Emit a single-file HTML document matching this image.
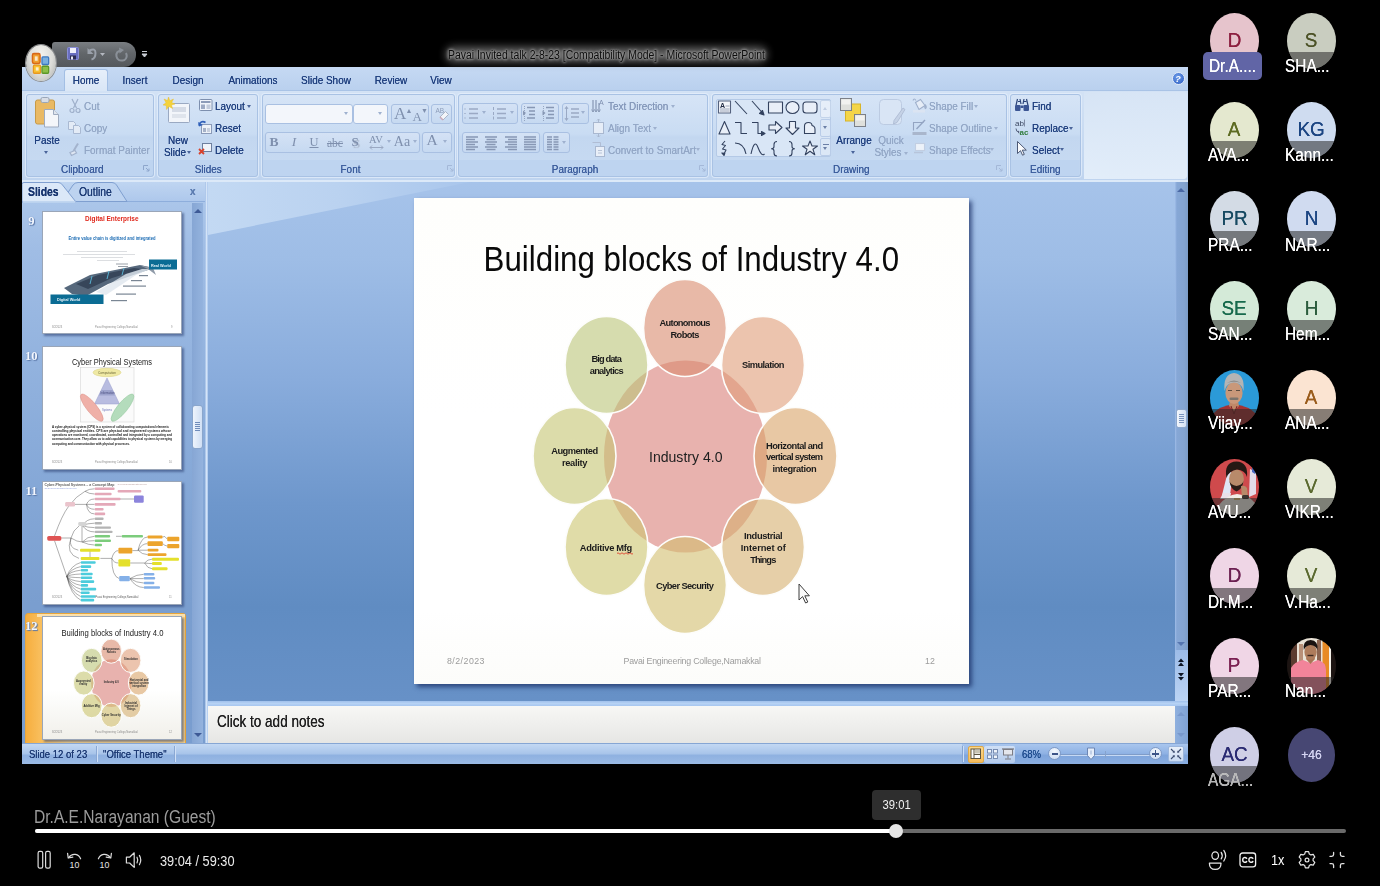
<!DOCTYPE html>
<html lang="en">
<head>
<meta charset="utf-8">
<title>Meeting recording</title>
<style>
*{box-sizing:border-box;margin:0;padding:0}
html,body{width:1380px;height:886px;overflow:hidden;background:#000}
body{position:relative;font-family:"Liberation Sans",sans-serif;color:#fff}
.abs{position:absolute}
/* ---------- participants ---------- */
.av{position:absolute;width:49px;height:56px;border-radius:50%;overflow:hidden;text-align:center;font-size:21px;line-height:54.5px;text-shadow:0 0 .6px currentColor;background-image:linear-gradient(rgba(0,0,0,.05),rgba(255,255,255,.06))}
.av i{position:absolute;left:0;right:0;top:39.25px;bottom:0;background:rgba(40,40,40,.55)}
.av span{display:inline-block;transform:scaleX(.9)}
.nm{text-shadow:0 0 .5px #fff;position:absolute;width:60px;font-size:17.5px;line-height:22px;color:#fff;white-space:nowrap;transform-origin:0 50%;transform:scaleX(.88);filter:blur(.3px)}
/* ---------- player ---------- */
#spk{left:34px;top:806px;font-size:17.5px;line-height:22px;color:#9c9c9c;transform-origin:0 50%;transform:scaleX(.89);white-space:nowrap}
#track{left:35px;top:829px;width:1311px;height:4px;border-radius:2px;background:#6a6a6a}
#played{left:35px;top:829px;width:861px;height:4px;border-radius:2px;background:#fff}
#thumb{left:889px;top:824px;width:14px;height:14px;border-radius:50%;background:#e4e4e4}
#tip{left:872px;top:790px;width:49px;height:30px;border-radius:4px;background:#2e2e2e;font-size:12.5px;line-height:30px;text-align:center;color:#f2f2f2}
#tip span{display:inline-block;transform:scaleX(.9)}
#time{left:160px;top:852px;font-size:14.5px;line-height:18px;color:#ececec;transform-origin:0 50%;transform:scaleX(.88);white-space:nowrap}
#spd{left:1271px;top:851px;font-size:15px;line-height:18px;color:#fff;transform-origin:0 50%;transform:scaleX(.85)}
/* ---------- powerpoint window ---------- */
#ppt{left:22px;top:67px;width:1166px;height:697px;background:#bdd3ee;overflow:hidden;filter:blur(.45px)}
#ppt, #ppt *{font-family:"Liberation Sans",sans-serif}

.tab{position:absolute;top:72px;height:16px;font-size:11.5px;line-height:16px;text-align:center;color:#1f3f7e;white-space:nowrap}
.grp{position:absolute;top:93.5px;height:83.5px;border:1px solid #a9c2e4;border-radius:3px;background:linear-gradient(#bed4f0,#bed4f0) bottom/100% 16px no-repeat,linear-gradient(#d6e4f6,#c9dcf3 48%,#c3d7f0 52%,#c8dbf2);box-shadow:0 0 0 1px rgba(230,240,252,.7)}
.grp b{position:absolute;left:0;right:0;bottom:-2px;height:16px;font-weight:normal;font-size:11.5px;line-height:15px;text-align:center;color:#3b5c9c;border-radius:0 0 2px 2px}
.t{position:absolute;font-size:11.5px;line-height:14px;white-space:nowrap;color:#1f3f7e}
.d{color:#93a7c6}

.tab,.t,.grp b{transform:scaleX(.865);text-shadow:0 0 .6px currentColor}
.grp.l b{right:16px}
.t{transform-origin:0 50%}
.t.c{text-align:center;transform-origin:50% 50%}
.arr{position:absolute;width:0;height:0;border:2.5px solid transparent;border-top:3px solid #4a649a;border-bottom:0}
.arr.s{border-top-color:#9fb1cf}
.bx{position:absolute;border:1px solid #a9c0e2;border-radius:3px;background:linear-gradient(#d4e2f5,#c6d9f1)}
.sf{position:absolute;font-family:"Liberation Serif",serif !important;color:#7f90ae;line-height:18px;white-space:nowrap}
.sf.c{text-align:center}

.num{position:absolute;width:17px;text-align:center;font-size:12.5px;font-weight:bold;line-height:14px;color:#f4f8ff;text-shadow:1px 1px 1px #5c78a8,0 0 1px #6c88b8;font-family:"Liberation Serif",serif !important}
.th{position:absolute;left:41.8px;width:140px;height:123.5px;background:#fff;border:1px solid #9aa6b8;box-shadow:1.5px 1.5px 2px rgba(40,60,110,.55)}

.zc{position:absolute;top:747px;width:13px;height:13px;border-radius:50%;border:1px solid #7f9ac6;background:radial-gradient(circle at 50% 30%,#f4f8fd,#c6d8f2)}
.av svg{filter:blur(.7px)}
</style>
</head>
<body>

<!-- ======= shared PowerPoint window ======= -->
<div id="ppt" class="abs">
<div id="g" class="abs" style="left:-22px;top:-67px;width:1380px;height:886px">
<!-- tab strip -->
<div class="abs" style="left:22px;top:67px;width:1166px;height:24px;background:linear-gradient(#c5d9f3,#b9d0ee)"></div>
<div class="abs" style="left:22px;top:90px;width:1166px;height:90px;background:linear-gradient(#d3e2f5,#c6d9f1 60%,#bfd4ef)"></div>
<div class="abs" style="left:22px;top:90px;width:1166px;height:1px;background:#a9c3e6"></div>
<div class="abs" style="left:64px;top:69px;width:44px;height:22px;border:1px solid #a3bfe4;border-bottom:0;border-radius:3px 3px 0 0;background:linear-gradient(#e6effa,#d9e6f6)"></div>
<div class="tab" style="left:64px;width:44px">Home</div>
<div class="tab" style="left:113px;width:44px">Insert</div>
<div class="tab" style="left:164px;width:48px">Design</div>
<div class="tab" style="left:220px;width:66px">Animations</div>
<div class="tab" style="left:294px;width:64px">Slide Show</div>
<div class="tab" style="left:368px;width:46px">Review</div>
<div class="tab" style="left:424px;width:34px">View</div>
<!-- help -->
<div class="abs" style="left:1171.500px;top:72px;width:13px;height:13px;border-radius:50%;background:radial-gradient(circle at 40% 35%,#6d9be8,#2a5bc0);border:1px solid #dfe9f8;color:#fff;font-size:9.500px;font-weight:bold;line-height:11px;text-align:center;font-style:italic">?</div>
<div class="abs" style="left:1084px;top:92px;width:102.500px;height:87px;border-radius:0 4px 4px 0;background:linear-gradient(90deg,rgba(222,234,248,0),#dce8f7 30%),linear-gradient(#d6e4f5,#e2edf9)"></div>
<div class="abs" style="left:1084px;top:92px;width:102.500px;height:87px;border-radius:0 4px 4px 0;background:linear-gradient(#d6e4f5,#e3eefa);opacity:.8"></div>
<!-- groups -->
<div class="grp l" style="left:25.500px;width:128.500px"><b>Clipboard</b></div>
<div class="grp" style="left:157.500px;width:100.500px"><b>Slides</b></div>
<div class="grp l" style="left:261.500px;width:193px"><b>Font</b></div>
<div class="grp l" style="left:458px;width:250px"><b>Paragraph</b></div>
<div class="grp l" style="left:712px;width:294.500px"><b>Drawing</b></div>
<div class="grp" style="left:1010px;width:70.500px"><b>Editing</b></div>
<!-- Clipboard -->
<svg class="abs" style="left:32px;top:96px" width="30" height="34" viewBox="0 0 30 34"><rect x="3.500" y="4" width="19" height="24" rx="2" fill="#e9b964" stroke="#c79a48"/><rect x="9" y="1.500" width="8" height="5" rx="1.500" fill="#d8dde6" stroke="#9aa6b8"/><path d="M12.500 13.500h9l5 5v12.500h-14z" fill="#f4f6fa" stroke="#9eabc0"/><path d="M21.500 13.500v5h5" fill="#dfe5ee" stroke="#9eabc0"/></svg>
<div class="t c" style="left:27px;width:40px;top:132.500px">Paste</div>
<div class="arr" style="left:44px;top:151px"></div>
<svg class="abs" style="left:68px;top:98px" width="14" height="16" viewBox="0 0 14 16" fill="none" stroke="#9fb0cb" stroke-width="1.200"><path d="M4 1l4.500 9M10 1L5.500 10"/><circle cx="4" cy="12.500" r="2"/><circle cx="10" cy="12.500" r="2"/></svg>
<div class="t d" style="left:84px;top:99px">Cut</div>
<svg class="abs" style="left:67px;top:120px" width="15" height="15" viewBox="0 0 15 15" fill="#e3ebf6" stroke="#a9b9d2"><path d="M1.500 1.500h5l2 2v6h-7z"/><path d="M6.500 5.500h5l2 2v6h-7z"/></svg>
<div class="t d" style="left:84px;top:121px">Copy</div>
<svg class="abs" style="left:68px;top:142px" width="14" height="15" viewBox="0 0 14 15" fill="none" stroke="#a3b3cd" stroke-width="1.300"><path d="M10 1.500L5.500 9" stroke-width="2"/><path d="M2 10.500l5-2 1.500 2.500-5 2.500z" fill="#dfe7f3"/></svg>
<div class="t d" style="left:84px;top:142.500px">Format Painter</div>
<svg class="abs" style="left:143px;top:165px" width="7" height="7" viewBox="0 0 7 7" fill="none" stroke="#8ea6cc"><path d="M.5 5V.5H5M3 3l3 3M6 3.500V6H3.500"/></svg>
<!-- Slides -->
<svg class="abs" style="left:163px;top:97px" width="30" height="30" viewBox="0 0 30 30"><rect x="5.500" y="6.500" width="21" height="19" rx="1" fill="#f2f5fa" stroke="#9aa9c2"/><rect x="9" y="10" width="14" height="5" fill="#d5dbe6"/><rect x="9" y="17" width="14" height="4" fill="#dfe4ec"/><path d="M5.500 0l1.300 3.700L10.500 2 8.700 5.500 12 7 8.500 8l1 3.500L6 9.500 3.500 12.500 3.300 8.500 0 8l3-2.300L1 2l3.500 1.500z" fill="#f4d23c" stroke="#e8b820" stroke-width=".4"/></svg>
<div class="t c" style="left:158px;width:40px;top:132.500px">New</div>
<div class="t c" style="left:155px;width:40px;top:144.500px">Slide</div>
<div class="arr" style="left:187px;top:151px"></div>
<svg class="abs" style="left:199px;top:99px" width="14" height="13" viewBox="0 0 14 13"><rect x=".5" y=".5" width="12.500" height="11" rx="1" fill="#f0f4fa" stroke="#7d8fae"/><rect x="2" y="2" width="9.500" height="2" fill="#8d9cb8"/><rect x="2" y="5.500" width="4" height="4.500" fill="#9eabc4"/><rect x="7.500" y="5.500" width="4" height="4.500" fill="#c2cbdb"/></svg>
<div class="t" style="left:215px;top:99px">Layout</div>
<div class="arr" style="left:247px;top:104.500px"></div>
<svg class="abs" style="left:198px;top:119px" width="15" height="16" viewBox="0 0 15 16"><rect x="3.500" y="5.500" width="10" height="9" fill="#eef2f8" stroke="#8a9ab8"/><rect x="5" y="9" width="3" height="4" fill="#a6b2c8"/><rect x="9" y="9" width="3" height="4" fill="#c8d0de"/><path d="M1 6.500C1.500 3 4.500 1.500 7.500 3.500" fill="none" stroke="#2f5fb8" stroke-width="1.600"/><path d="M0 3l1 4.500 4-1.500z" fill="#2f5fb8"/></svg>
<div class="t" style="left:215px;top:121px">Reset</div>
<svg class="abs" style="left:198px;top:142px" width="15" height="14" viewBox="0 0 15 14"><rect x="4.500" y="1.500" width="9" height="8" fill="#f0f4fa" stroke="#6d7f9e"/><path d="M1 7l5 5M6 7l-5 5" stroke="#d8422c" stroke-width="1.800"/></svg>
<div class="t" style="left:215px;top:142.500px">Delete</div>
<!-- Font -->
<div class="bx" style="left:265px;top:104px;width:88px;height:20px;background:#f3f6fb"></div>
<div class="bx" style="left:352.500px;top:104px;width:35px;height:20px;background:#f3f6fb"></div>
<div class="arr s" style="left:344px;top:112px"></div>
<div class="arr s" style="left:378px;top:112px"></div>
<div class="bx" style="left:390.500px;top:104px;width:38px;height:20px"></div>
<div class="bx" style="left:431px;top:104px;width:20.500px;height:20px"></div>
<div class="sf" style="left:394px;top:105px;font-size:17px">A</div><div class="sf" style="left:405.500px;top:102px;font-size:7px">▲</div>
<div class="sf" style="left:412.500px;top:108px;font-size:13px">A</div><div class="sf" style="left:421px;top:102px;font-size:7px">▼</div>
<svg class="abs" style="left:433px;top:106px" width="17" height="16" viewBox="0 0 17 16"><text x="2.500" y="7" font-size="6.500" fill="#8c9cb8">AB</text><path d="M12.500 5.500l3 3-5.500 5.500-3-3z" fill="#f2f4f8" stroke="#a8b4c8"/><path d="M7 11l3 3" stroke="#c8a8b8" stroke-width="1.500"/></svg>
<div class="bx" style="left:265px;top:131.500px;width:154.500px;height:21.500px"></div>
<div class="bx" style="left:421.500px;top:131.500px;width:30px;height:21.500px"></div>
<div class="sf c" style="left:266px;width:16px;top:133px;font-weight:bold;font-size:13.500px">B</div>
<div class="sf c" style="left:286px;width:16px;top:133px;font-style:italic;font-size:13.500px">I</div>
<div class="sf c" style="left:306px;width:16px;top:133px;text-decoration:underline;font-size:12.500px">U</div>
<div class="sf c" style="left:323px;width:24px;top:134px;text-decoration:line-through;font-size:11.500px">abc</div>
<div class="sf c" style="left:347px;width:16px;top:133px;font-weight:bold;font-size:13px;text-shadow:1.500px 1.500px 1px #a8b4c8">S</div>
<div class="sf c" style="left:366px;width:20px;top:130.500px;font-size:10.500px">AV</div>
<svg class="abs" style="left:369px;top:145px" width="15" height="5" viewBox="0 0 15 5" fill="none" stroke="#9aa8c2"><path d="M1 2.500h13M3 .5l-2 2 2 2M12 .5l2 2-2 2"/></svg>
<div class="arr s" style="left:387px;top:140px"></div>
<div class="sf c" style="left:391px;width:22px;top:133px;font-size:14px">Aa</div>
<div class="arr s" style="left:413px;top:140px"></div>
<div class="sf c" style="left:424px;width:16px;top:131px;font-size:15.500px">A</div>
<div class="arr s" style="left:443px;top:140px"></div>
<svg class="abs" style="left:447px;top:165px" width="7" height="7" viewBox="0 0 7 7" fill="none" stroke="#a4b8d8"><path d="M.5 5V.5H5M3 3l3 3M6 3.500V6H3.500"/></svg>
<!-- Paragraph -->
<div class="bx" style="left:461.500px;top:102.500px;width:56px;height:21.500px"></div>
<div class="bx" style="left:520.500px;top:102.500px;width:38px;height:21.500px"></div>
<div class="bx" style="left:562px;top:102.500px;width:26.500px;height:21.500px"></div>
<div class="bx" style="left:461.500px;top:132px;width:78px;height:21px"></div>
<div class="bx" style="left:543px;top:132px;width:27px;height:21px"></div>
<svg class="abs" style="left:461px;top:102px" width="128" height="52" viewBox="0 0 128 52" fill="none" stroke="#8c9cb8" stroke-width="1.500">
<g stroke="#9aa9c4"><path d="M8 7h9M8 11.500h9M8 16h9"/><path d="M4 6.500v1M4 11v1M4 15.500v1" stroke-width="1.300"/><path d="M36 7h9M36 11.500h9M36 16h9"/><path d="M32.500 5v3M32.500 10v3M32.500 14.500v3" stroke-width="1"/></g>
<g stroke="#8797b4"><path d="M66 5.500h8M68 9h6M68 12.500h6M66 16h8" stroke-width="1.400"/><path d="M62 8.500l3 2.500-3 2.500z" fill="#8797b4" stroke="none"/><path d="M63.500 4v15" stroke-width=".8" stroke-dasharray="1 1"/>
<path d="M85 5.500h8M87 9h6M87 12.500h6M85 16h8" stroke-width="1.400"/><path d="M81.500 8.500l3 2.500-3 2.500z" fill="#8797b4" stroke="none"/><path d="M82.500 4v15" stroke-width=".8" stroke-dasharray="1 1"/></g>
<g stroke="#9aa9c4"><path d="M110 7h8M110 11h8M110 15h8" stroke-width="1.300"/><path d="M105.500 5v13M104 7l1.500-2.500L107 7M104 16l1.500 2.500L107 16" stroke-width="1"/></g>
<g stroke="#8797b4" stroke-width="1.300"><path d="M5 35h12M5 37.500h9M5 40h12M5 42.500h9M5 45h12M5 47.500h9"/><path d="M24 35h12M25.500 37.500h9M24 40h12M25.500 42.500h9M24 45h12M25.500 47.500h9"/><path d="M44 35h12M47 37.500h9M44 40h12M47 42.500h9M44 45h12M47 47.500h9"/><path d="M63 35h12M63 37.500h12M63 40h12M63 42.500h12M63 45h12M63 47.500h12"/>
<path d="M86 35h5M92.500 35h5M86 37.500h5M92.500 37.500h5M86 40h5M92.500 40h5M86 42.500h5M92.500 42.500h5M86 45h5M92.500 45h5M86 47.500h5M92.500 47.500h5"/></g></svg>
<div class="arr s" style="left:481.500px;top:111px"></div><div class="arr s" style="left:509.500px;top:111px"></div><div class="arr s" style="left:581px;top:111px"></div><div class="arr s" style="left:562px;top:141px"></div>
<svg class="abs" style="left:590px;top:97px" width="16" height="62" viewBox="0 0 16 62" fill="none" stroke="#8797b4"><path d="M3 3v12M6 3v12M9 6v9" stroke-width="1.200"/><path d="M1.500 12.500L3 15l1.500-2.500M4.500 12.500L6 15l1.500-2.500M7.500 12.500L9 15l1.500-2.500" stroke-width=".8"/><text x="9" y="7.500" font-size="7" fill="#7d8eae" stroke="none">A</text>
<rect x="3.500" y="25.500" width="10" height="11" fill="#e6edf7" stroke="#a9b8d0"/><path d="M8.500 22v3M8.500 37v3M7 23.500L8.500 22l1.500 1.500M7 38.500L8.500 40l1.500-1.500" stroke="#a9b8d0"/>
<path d="M2.500 45.500h8v4" stroke="#b0bdd4"/><rect x="5.500" y="49.500" width="9" height="10" fill="#e9eff8" stroke="#a9b8d0"/><path d="M8 53.500h4M8 56h4" stroke="#b8c4d8"/></svg>
<div class="t d" style="left:607.500px;top:99px;color:#8598ba">Text Direction</div><div class="arr s" style="left:671px;top:104.500px"></div>
<div class="t d" style="left:607.500px;top:121px">Align Text</div><div class="arr s" style="left:653px;top:126.500px"></div>
<div class="t d" style="left:607.500px;top:142.500px">Convert to SmartArt</div><div class="arr s" style="left:696px;top:148px"></div>
<svg class="abs" style="left:699px;top:165px" width="7" height="7" viewBox="0 0 7 7" fill="none" stroke="#a4b8d8"><path d="M.5 5V.5H5M3 3l3 3M6 3.500V6H3.500"/></svg>
<!-- Drawing -->
<div class="abs" style="left:716px;top:98.500px;width:115px;height:58.500px;border:1px solid #b4c9e6;border-radius:2px;background:#d9e6f6"></div>
<div class="abs" style="left:820px;top:99.500px;width:10.500px;height:18px;border:1px solid #c4d4ea;background:#e6eef9;border-radius:2px"></div>
<div class="abs" style="left:820px;top:118.500px;width:10.500px;height:18px;border:1px solid #b9cce8;background:#dbe7f6;border-radius:2px"></div>
<div class="abs" style="left:820px;top:137.500px;width:10.500px;height:18.500px;border:1px solid #b9cce8;background:#dbe7f6;border-radius:2px"></div>
<div class="arr s" style="left:823px;top:107px;transform:rotate(180deg);border-top-color:#c0cde2"></div>
<div class="arr" style="left:823px;top:126px;border-top-color:#6b7fa6"></div>
<div class="arr" style="left:823px;top:147px;border-top-color:#6b7fa6"></div>
<div class="abs" style="left:822.500px;top:143.500px;width:6px;height:1.500px;background:#6b7fa6"></div>
<svg class="abs" style="left:716px;top:98px" width="104" height="60" viewBox="0 0 104 60" fill="none" stroke="#33425f" stroke-width="1.100" stroke-linejoin="round">
<rect x="2.500" y="3" width="12" height="12" fill="#f4f6fa" stroke="#55627e"/><text x="4" y="10" font-size="7" font-weight="bold" fill="#222c44" stroke="none">A</text><path d="M9.500 8h4M4 11h9.500M4 13h9.500" stroke="#8792a8" stroke-width=".8"/>
<path d="M19 3l12 13"/>
<path d="M36 3l11 12.500"/><path d="M48 17l-4.500-1.500 3-3z" fill="#33425f"/>
<rect x="52.500" y="4" width="14" height="11" fill="#e9eff8"/>
<ellipse cx="76.500" cy="9.500" rx="6.500" ry="6" fill="#e9eff8"/>
<rect x="87" y="4" width="14" height="11" rx="3" fill="#e9eff8"/>
<path d="M8.500 23.500l5.500 12.500h-11z" fill="#e9eff8"/>
<path d="M19 24.500h6v11h6"/>
<path d="M36 24.500h6v11h5.500"/><path d="M49 35.500l-3.500-2v4z" fill="#33425f"/>
<path d="M53 27h6.500v-3.500l6.500 6-6.500 6V32H53z" fill="#e9eff8"/>
<path d="M73.500 23.500h6v6.500h3.500l-6.500 6.500-6.500-6.500h3.500z" fill="#e9eff8"/>
<path d="M88.500 35.500v-7.500q0-3.500 4-3.500q3.500 0 3.500 3q3 .5 3 4v4z" fill="#e9eff8"/>
<path d="M9 43l-3 3.500 3.500 1-3 3.500 3.500 1-2 4"/><path d="M8 57.500l-2.200-2.500 3 .3z" fill="#33425f"/>
<path d="M19 45q9 0 11 11"/>
<path d="M35 56q3.500-16 7-6.500t6.500 6.500"/>
<path d="M61 43.500q-3 0-3 3v2q0 2.200-2.500 2.200 2.500 0 2.500 2.300v2q0 3 3 3"/>
<path d="M73 43.500q3 0 3 3v2q0 2.200 2.500 2.200-2.500 0-2.500 2.300v2q0 3-3 3"/>
<path d="M94 43l2 5h5.500l-4.500 3.300 1.800 5.500-4.800-3.500-4.800 3.500 1.800-5.500-4.500-3.300h5.500z" fill="#e9eff8"/>
</svg>
<svg class="abs" style="left:838px;top:96px" width="32" height="34" viewBox="0 0 32 34"><rect x="7.500" y="8" width="15" height="17" fill="#f4d548" stroke="#d8b428"/><rect x="2.500" y="2.500" width="11" height="12" fill="#dfe0dc" stroke="#7c8088"/><rect x="3.500" y="3.500" width="9" height="5" fill="#f2f2f0"/><rect x="16.500" y="18.500" width="11" height="12" fill="#dfe0dc" stroke="#7c8088"/><rect x="17.500" y="19.500" width="9" height="5" fill="#f2f2f0"/></svg>
<div class="t c" style="left:829px;width:50px;top:133px">Arrange</div>
<div class="arr" style="left:851px;top:151px"></div>
<svg class="abs" style="left:876px;top:96px" width="32" height="34" viewBox="0 0 32 34"><rect x="3.500" y="3.500" width="22" height="25" rx="4" fill="#d9e5f5" stroke="#bccbe2"/><path d="M27 12l2 1.500-8 13-3.500 1.500.5-3.500z" fill="#c5d2e6" stroke="#a9b8d0" stroke-width=".8"/></svg>
<div class="t c d" style="left:866px;width:50px;top:133px">Quick</div>
<div class="t c d" style="left:863px;width:50px;top:145px">Styles</div>
<div class="arr s" style="left:903.500px;top:151.500px"></div>
<svg class="abs" style="left:910px;top:96px" width="18" height="62" viewBox="0 0 18 62" fill="none" stroke="#9fb0cc" stroke-width="1.100"><path d="M5.500 6.500l5-3 4.500 6-6 4z" fill="#e6edf7"/><path d="M6 4.500q-2-3-3 0M15.500 9q1.500 2.500 0 3.500-1.500-1 0-3.500z"/><rect x="3" y="14" width="12" height="2.500" fill="#dbe4f2" stroke="none"/>
<path d="M3.500 34.500v-8h10" stroke="#93a4c2"/><path d="M6.500 33l8.500-9" stroke="#93a4c2" stroke-width="1.400"/><rect x="2.500" y="36" width="14" height="3" fill="#a9b6cc" stroke="none"/>
<rect x="5.500" y="47.500" width="9" height="7" fill="#edf2f9" stroke="#c2cee2"/><path d="M4 56.500h9" stroke="#b7c4da" stroke-width="1.500"/></svg>
<div class="t d" style="left:928.500px;top:99px">Shape Fill</div><div class="arr s" style="left:974px;top:104.500px"></div>
<div class="t d" style="left:928.500px;top:121px">Shape Outline</div><div class="arr s" style="left:994px;top:126.500px"></div>
<div class="t d" style="left:928.500px;top:142.500px">Shape Effects</div><div class="arr s" style="left:990px;top:148px"></div>
<svg class="abs" style="left:996px;top:165px" width="7" height="7" viewBox="0 0 7 7" fill="none" stroke="#a4b8d8"><path d="M.5 5V.5H5M3 3l3 3M6 3.500V6H3.500"/></svg>
<!-- Editing -->
<svg class="abs" style="left:1014px;top:97px" width="16" height="62" viewBox="0 0 16 62"><g fill="none" stroke="#2c4478" stroke-width="1.200"><path d="M3.500 2L2 8.500M6 2l1 5M10 2L9 7M12.500 2L14 8.500"/><path d="M4 4.500h2M10 4.500h2.500" /></g><rect x="1" y="8" width="5.500" height="6" rx="1" fill="#3c5694"/><rect x="9.500" y="8" width="5.500" height="6" rx="1" fill="#3c5694"/><rect x="6.500" y="8.500" width="3" height="2.500" fill="#3c5694"/>
<text x="1" y="29" font-size="8" fill="#3a4660">ab</text><path d="M10.500 22.500v7" stroke="#6b7690" stroke-width=".8"/><text x="5.500" y="37.500" font-size="8" font-weight="bold" fill="#2e7a3a">ac</text><path d="M2 31.500q0 3.500 3 3.500" fill="none" stroke="#55627e"/><path d="M4 33.500l1.700 1.500-1.700 1.500z" fill="#55627e"/>
<path d="M3.500 44.500v12l3-2.800 2 4.500 1.800-.8-2-4.300h4z" fill="#fafbfd" stroke="#3c4a66" stroke-width=".9" stroke-linejoin="round"/></svg>
<div class="t" style="left:1031.500px;top:99px">Find</div>
<div class="t" style="left:1031.500px;top:121px">Replace</div><div class="arr" style="left:1068.500px;top:126.500px"></div>
<div class="t" style="left:1031.500px;top:142.500px">Select</div><div class="arr" style="left:1060px;top:148px"></div>
<!--RIBBONITEMS3-->
<!-- slide panel -->
<div class="abs" style="left:22px;top:180px;width:186px;height:564px;background:linear-gradient(#b0caec 0,#a0bde5 12%,#8aacda 45%,#7a9ecf 75%,#799dcf)"></div>
<div class="abs" style="left:22px;top:180px;width:1166px;height:2px;background:#dce9f8"></div>
<div class="abs" style="left:22px;top:182px;width:183px;height:19.500px;background:linear-gradient(#bfd5f1,#aec8ec);border-bottom:1px solid #8eaedc"></div>
<svg class="abs" style="left:22px;top:181px" width="186" height="22" viewBox="0 0 186 22"><path d="M40 20.500L51 4q2-2.500 5-2.500h34q3 0 4.500 2.500L105 20.500z" fill="#bdd3f0" stroke="#7f9fd0"/><path d="M0 21V3.500q0-2 2-2h34q3 0 4.500 2.500L54 21z" fill="#dbe8f8" stroke="#7f9fd0"/><path d="M1 21h52.500" stroke="#c9dcf4" stroke-width="1.500"/></svg>
<div class="t" style="left:28px;top:185px;font-weight:bold;font-size:12px;color:#17346e">Slides</div>
<div class="t" style="left:79px;top:185px;font-size:12px;color:#1c3a74">Outline</div>
<div class="t" style="left:190px;top:184px;font-size:11.500px;font-weight:bold;color:#5c7cb0">x</div>
<div class="abs" style="left:191.500px;top:203px;width:11.500px;height:540px;background:linear-gradient(90deg,#86a6d4,#94b3de);"></div>
<div class="abs" style="left:193.500px;top:209px;width:0;height:0;border:4px solid transparent;border-bottom:4.500px solid #3e5a96;border-top:0"></div>
<div class="abs" style="left:193.500px;top:733px;width:0;height:0;border:4px solid transparent;border-top:4.500px solid #3e5a96;border-bottom:0"></div>
<div class="abs" style="left:191.500px;top:405px;width:11px;height:44px;border:1px solid #8aa6cc;border-radius:3px;background:linear-gradient(90deg,#eef4fc,#d0dff4)"></div>
<div class="abs" style="left:194.500px;top:422px;width:5px;height:9px;background:repeating-linear-gradient(#6f8cba 0 1px,transparent 1px 2px)"></div>
<div class="abs" style="left:205px;top:182px;width:3px;height:562px;background:linear-gradient(90deg,#9dbbe4,#d4e4f8 50%,#a9c5ec)"></div>
<!-- selection -->
<div class="abs" style="left:24.500px;top:613px;width:161px;height:131px;border:1px solid #e9a63a;border-radius:3px 3px 0 0;background:linear-gradient(90deg,#f6ae3e 0,#f9c060 10%,#fbd68c 26%,#fbd48a 100%)"></div>
<div class="abs" style="left:37px;top:614px;width:148px;height:3px;background:#fbe1ae"></div>
<!-- numbers -->
<div class="num" style="left:22.800px;top:214px">9</div>
<div class="num" style="left:22.800px;top:349px">10</div>
<div class="num" style="left:22.800px;top:484px">11</div>
<div class="num" style="left:22.800px;top:619px">12</div>
<!-- thumbs -->
<div class="th" style="top:210.500px"></div>
<div class="th" style="top:346px"></div>
<div class="th" style="top:481px"></div>
<div class="th" style="top:616px;background:linear-gradient(#fff 60%,#f1f0ea)"></div>
<svg class="abs" style="left:42px;top:210px" width="141" height="124" viewBox="42 210 141 124" font-family="Liberation Sans, sans-serif">
<text x="85" y="221" font-size="7.300" fill="#e0281c" font-weight="bold" textLength="53.500" lengthAdjust="spacingAndGlyphs">Digital Enterprise</text>
<text x="68.500" y="240" font-size="4.600" fill="#1c6cb4" font-weight="bold" textLength="87" lengthAdjust="spacingAndGlyphs">Entire value chain is digitized and integrated</text>
<g stroke="#c4c8cc" stroke-width=".6"><path d="M77 251.500h50M63 254.500h72M81 257.500h42M97 260.500h22"/><path d="M116 264h12M118 266.500h10" stroke="#9aa0a8" stroke-width="1"/></g>
<path d="M64 288l26-13 50-10 14 3-12 4-34 12-22 12-14-2z" fill="#56687c"/><path d="M76 284l22-9 36-7 8 1-30 9-24 11z" fill="#37465a"/><path d="M96 292l30-18 16-5 8 0-14 6-30 20z" fill="#dfe6ee" opacity=".8"/><path d="M139 265l14 3 3 7-8-6z" fill="#8f9aa8"/>
<g stroke="#58b0d0" stroke-width="1" fill="none"><path d="M92 276l-2 8M109 271l-2 8M124 268l-2 7"/></g>
<g fill="#7a8694"><rect x="139" y="275" width="9" height="1.200"/><rect x="131" y="280" width="11" height="1.200"/><rect x="123" y="285.500" width="23" height="1.200"/><rect x="116" y="293.500" width="20" height="1.200"/><rect x="111" y="300" width="16" height="1.200"/></g>
<rect x="149" y="259.500" width="28" height="10" fill="#0b6c94"/><text x="151" y="266.500" font-size="3.800" fill="#e8f4fa" font-weight="bold">Real World</text>
<rect x="50.500" y="294.500" width="53" height="9.500" fill="#0b6c94"/><text x="57" y="301.200" font-size="3.800" fill="#e8f4fa" font-weight="bold">Digital World</text>
<g font-size="2.600" fill="#8c8c8c"><text x="52" y="327.500">8/2/2023</text><text x="95" y="327.500">Pavai Engineering College,Namakkal</text><text x="171" y="327.500">9</text></g>
</svg>
<svg class="abs" style="left:42px;top:345px" width="141" height="125" viewBox="42 345 141 125" font-family="Liberation Sans, sans-serif">
<text x="72" y="365" font-size="8.600" fill="#1a1a1a" textLength="80" lengthAdjust="spacingAndGlyphs">Cyber Physical Systems</text>
<rect x="80.500" y="367.500" width="53.500" height="54.500" fill="#fbfbfb" stroke="#d6d6d6" stroke-width=".6"/>
<ellipse cx="107" cy="372.500" rx="14" ry="4.200" fill="#efe9a4" stroke="#d8d080" stroke-width=".5"/><text x="98" y="373.800" font-size="3.200" fill="#6c6838">Computation</text>
<path d="M107 378l12.500 26h-25z" fill="#b8bce0" stroke="#9a9ecc" stroke-width=".5"/><path d="M101.500 390h11l2.500 5.500h-16z" fill="#9ca2cc"/><text x="100.500" y="394.300" font-size="2.800" fill="#4c5080">Information</text>
<ellipse cx="91.800" cy="407.700" rx="5" ry="17" transform="rotate(-39 91.800 407.700)" fill="#efb0a8" stroke="#dc8c84" stroke-width=".5"/>
<ellipse cx="122.500" cy="407.700" rx="5" ry="17" transform="rotate(39 122.500 407.700)" fill="#b4dcbc" stroke="#8cc498" stroke-width=".5"/>
<text x="102" y="410.500" font-size="2.600" fill="#6a70b8">Systems</text>
<g font-size="2.700" font-weight="bold" fill="#141414"><text x="52" y="427.500" textLength="117" lengthAdjust="spacingAndGlyphs">A cyber-physical system (CPS) is a system of collaborating computational elements</text><text x="52" y="431.800" textLength="119" lengthAdjust="spacingAndGlyphs">controlling physical entities. CPS are physical and engineered systems whose</text><text x="52" y="436.100" textLength="120" lengthAdjust="spacingAndGlyphs">operations are monitored, coordinated, controlled and integrated by a computing and</text><text x="52" y="440.400" textLength="120" lengthAdjust="spacingAndGlyphs">communication core. They allow us to add capabilities to physical systems by merging</text><text x="52" y="444.700" textLength="78" lengthAdjust="spacingAndGlyphs">computing and communication with physical processes.</text></g>
<g font-size="2.600" fill="#8c8c8c"><text x="52" y="462.500">8/2/2023</text><text x="95" y="462.500">Pavai Engineering College,Namakkal</text><text x="169" y="462.500">10</text></g>
</svg>
<svg class="abs" style="left:42px;top:480px" width="141" height="125" viewBox="42 480 141 125" font-family="Liberation Sans, sans-serif">
<text x="44.400" y="485.600" font-size="3.500" fill="#5a5a5a" font-weight="bold" textLength="70" lengthAdjust="spacingAndGlyphs">Cyber-Physical Systems – a Concept Map</text><text x="117.600" y="485.400" font-size="2.200" fill="#b49c9c" textLength="29" lengthAdjust="spacingAndGlyphs">CyberPhysicalSystems.org</text><text x="44.400" y="489" font-size="2.100" fill="#8c9cdc" textLength="32" lengthAdjust="spacingAndGlyphs">CyberPhysicalSystems.org</text>
<g fill="none" stroke="#4c4c4c" stroke-width=".45"><path d="M54.5 536Q62 515 68.500 506.500Q76 496 85 491.300"/><path d="M85 491.300q4-2.500 9.500-2.500M85 491.300q4 2.700 9.500 2.700"/><path d="M75 504.400h11.500"/><path d="M86.500 504.400q2-5.400 8-5.400M86.500 504.400h8M86.500 504.400q2 4.900 8 4.900M86.500 504.400q1 9.500 8 9.500"/><path d="M61.400 538h9.600"/><path d="M71 538Q73 530 79 526"/><path d="M82.500 525.600q4-6.800 12-6.800M82.500 525.600q5-2.400 12-2.400M82.500 525.600q5 2 12 2M82.500 525.600q4 6.300 12 6.300"/><path d="M82 524v18"/><path d="M71 538q6 4 11.400 4"/><path d="M82.400 542q5-5.700 12-5.700M82.400 542q6-1.300 12-1.300M82.400 542q6 3 12 3"/><path d="M71 538q-3 10 7.300 12.200M71 538q-6 16 8 20.400"/><path d="M54.500 540.700L66.800 576.400"/><path d="M90 550.200v8.200"/><path d="M100.400 558.400h11.400"/><path d="M111.800 558.400q2-7.800 6.600-7.800M111.800 558.400q2 4.600 6.600 4.600M111.800 558.400q0 18 7.400 20.200"/><path d="M132.300 550.600h5.700"/><path d="M138 550.200q3-13 9.500-13.200M138 550.200q4-6.600 9.500-6.600M138 550.200h9.500M138 550.200q4 4.400 9.500 4.400"/><path d="M162.600 537q2-2 4.600 2M162.600 543.600q2 2 4.600 2.500"/><path d="M130.200 563h14.400"/><path d="M144.600 563q3-3.800 7.400-3.800M144.600 563q4 .6 7.400.6M144.600 563q3 5.700 7.400 5.700"/><path d="M129.800 578.600q7-4.300 13.900-4.300M129.800 578.600h13.900M129.800 578.600q7 4.400 13.900 4.400M129.800 578.600q6 8.900 13.900 8.900"/><path d="M116 536.300h5.700"/><path d="M116 499h18"/><path d="M66.800 576.400Q71.0 565.3 80.700 562.5M66.800 576.400Q71.0 568.6 80.700 566.6M66.800 576.400Q70.0 571.4 80.700 570.2M66.800 576.400Q70.0 574.5 80.700 574.0M66.800 576.400Q70.0 577.4 80.700 577.7M66.800 576.400Q70.0 580.6 80.700 581.6M66.800 576.400Q71.0 583.6 80.700 585.4M66.800 576.400Q71.0 586.6 80.700 589.1M66.800 576.400Q71.0 589.4 80.700 592.7M66.800 576.400Q71.0 592.5 80.700 596.5M66.800 576.400Q71.0 595.4 80.700 600.1"/></g>
<rect x="47.200" y="536" width="14.200" height="4.700" rx="1.600" fill="#df5454"/><rect x="65.200" y="502" width="9.800" height="4.400" rx="1.200" fill="#eac4cc"/><rect x="78.300" y="522" width="8.200" height="4" rx="1.200" fill="#d4d4d4"/>
<g fill="#e4a8b8"><rect x="94.6" y="487.5" width="20.0" height="2.6" rx="1"/><rect x="94.6" y="492.7" width="17.0" height="2.6" rx="1"/><rect x="94.6" y="497.7" width="26.0" height="2.6" rx="1"/><rect x="94.6" y="503.1" width="21.0" height="2.6" rx="1"/><rect x="94.6" y="508.0" width="9.0" height="2.6" rx="1"/><rect x="94.6" y="512.6" width="10.6" height="2.6" rx="1"/><rect x="117.6" y="490.0" width="23.7" height="2.6" rx="1"/></g><g fill="#b4b4b4"><rect x="94.6" y="517.6" width="9.0" height="2.4" rx="1"/><rect x="94.6" y="522.0" width="7.4" height="2.4" rx="1"/><rect x="94.6" y="526.4" width="16.4" height="2.4" rx="1"/><rect x="94.6" y="530.7" width="18.0" height="2.4" rx="1"/></g><g fill="#7ccc7c"><rect x="94.6" y="535.0" width="15.5" height="2.6" rx="1"/><rect x="94.6" y="539.4" width="16.4" height="2.6" rx="1"/><rect x="94.6" y="543.7" width="7.4" height="2.6" rx="1"/><rect x="121.7" y="535.0" width="21.3" height="2.6" rx="1"/></g><g fill="#e4e02c"><rect x="80.0" y="548.7" width="20.4" height="3.0" rx="1"/><rect x="80.7" y="556.9" width="18.8" height="3.0" rx="1"/><rect x="152.0" y="557.7" width="27.0" height="3.0" rx="1"/><rect x="152.0" y="562.1" width="9.8" height="3.0" rx="1"/><rect x="152.0" y="567.2" width="15.5" height="3.0" rx="1"/></g><g fill="#4cccdc"><rect x="80.7" y="561.2" width="15.0" height="2.6" rx="1"/><rect x="80.7" y="565.3" width="10.5" height="2.6" rx="1"/><rect x="80.7" y="568.9" width="7.4" height="2.6" rx="1"/><rect x="80.7" y="572.7" width="12.0" height="2.6" rx="1"/><rect x="80.7" y="576.4" width="11.5" height="2.6" rx="1"/><rect x="80.7" y="580.3" width="13.5" height="2.6" rx="1"/><rect x="80.7" y="584.1" width="7.4" height="2.6" rx="1"/><rect x="80.7" y="587.8" width="15.5" height="2.6" rx="1"/><rect x="80.7" y="591.4" width="9.0" height="2.6" rx="1"/><rect x="80.7" y="595.2" width="15.0" height="2.6" rx="1"/><rect x="80.7" y="598.8" width="13.5" height="2.6" rx="1"/></g><g fill="#eca42c"><rect x="147.5" y="535.6" width="15.1" height="2.8" rx="1"/><rect x="147.5" y="548.8" width="11.0" height="2.8" rx="1"/><rect x="147.5" y="553.2" width="19.0" height="2.8" rx="1"/></g><g fill="#84b0e8"><rect x="143.7" y="573.0" width="10.7" height="2.6" rx="1"/><rect x="143.7" y="577.0" width="11.5" height="2.6" rx="1"/><rect x="143.7" y="581.7" width="10.7" height="2.6" rx="1"/><rect x="143.7" y="586.2" width="16.3" height="2.6" rx="1"/></g>
<rect x="134" y="495.400" width="9.700" height="7.300" rx="1.200" fill="#8c84dc"/><rect x="118.400" y="547.700" width="13.900" height="5.800" rx="1" fill="#eca42c"/><rect x="118.400" y="559.200" width="11.800" height="7.400" rx="1" fill="#e4e02c"/><rect x="119.200" y="576" width="10.600" height="5.300" rx="1" fill="#84b0e8"/><rect x="147.500" y="541.200" width="15.300" height="4.800" rx="1" fill="#eca42c"/><rect x="167.200" y="536.800" width="12.100" height="4.400" rx="1" fill="#eca42c"/><rect x="167.200" y="544" width="12.100" height="4.200" rx="1" fill="#eca42c"/>
<g font-size="2.600" fill="#8c8c8c"><text x="52" y="597.600">8/2/2023</text><text x="95.500" y="597.600" fill="#5c5c5c">Pavai Engineering College,Namakkal</text><text x="169" y="597.600">11</text></g>
</svg>
<svg class="abs" style="left:42px;top:615px" width="141" height="125" viewBox="42 615 141 125" font-family="Liberation Sans, sans-serif">
<text x="61.500" y="636" font-size="8.600" fill="#1a1a1a" textLength="102" lengthAdjust="spacingAndGlyphs">Building blocks of Industry 4.0</text>
<g transform="translate(-59 569.500) scale(.2485 .2490)">
<ellipse cx="685.500" cy="456.500" rx="81.500" ry="96" fill="#e8b2ae"/>
<g stroke="#fdfdfb" stroke-width="4" fill-opacity=".6">
<ellipse cx="685" cy="328" rx="41.500" ry="48.500" fill="#d98a6e"/><ellipse cx="763" cy="365" rx="41.500" ry="48.500" fill="#df9d78"/><ellipse cx="795.500" cy="456" rx="41.500" ry="48.500" fill="#d9a367"/><ellipse cx="763" cy="547" rx="41.500" ry="48.500" fill="#d5af6e"/><ellipse cx="685" cy="585" rx="41.500" ry="48.500" fill="#d2be6e"/><ellipse cx="606.500" cy="547" rx="41.500" ry="48.500" fill="#cbc56e"/><ellipse cx="574.500" cy="456" rx="41.500" ry="48.500" fill="#c5c571"/><ellipse cx="606.500" cy="365" rx="41.500" ry="48.500" fill="#bbc578"/></g>
</g>
<g font-size="2.700" font-weight="bold" fill="#2c2c2c" text-anchor="middle" transform="translate(.3 1.600)"><text x="111" y="681.800">Industry 4.0</text><text x="111" y="648.500">Autonomous</text><text x="111" y="651.500">Robots</text><text x="130.700" y="658.800">Simulation</text><text x="138.800" y="679.500">Horizontal and</text><text x="138.800" y="682.300">vertical system</text><text x="138.800" y="685.100">integration</text><text x="130.700" y="702.500">Industrial</text><text x="130.700" y="705.300">Internet of</text><text x="130.700" y="708.100">Things</text><text x="111" y="714.800">Cyber Security</text><text x="91.200" y="705.300">Additive Mfg</text><text x="83" y="680.500">Augmented</text><text x="83" y="683.500">reality</text><text x="91.200" y="657.500">Big data</text><text x="91.200" y="660.500">analytics</text></g>
<g font-size="2.600" fill="#8c8c8c"><text x="52" y="733">8/2/2023</text><text x="95" y="733">Pavai Engineering College,Namakkal</text><text x="169" y="733">12</text></g>
</svg>
<!-- main editing area -->
<div class="abs" style="left:208px;top:182px;width:967px;height:519px;background:linear-gradient(#a6c3ea 0,#9ebde6 15%,#89acdc 38%,#6e97cc 62%,#608cc2 82%,#6791c7 100%)"></div>
<svg class="abs" style="left:208px;top:182px" width="967" height="80" viewBox="208 182 967 80"><defs><linearGradient id="hl" x1="0" y1="0" x2="1" y2="0"><stop offset="0" stop-color="#c3d9f3"/><stop offset=".5" stop-color="#bad2f0"/><stop offset="1" stop-color="#a9c6ec"/></linearGradient></defs><path d="M208 182h262L208 235z" fill="url(#hl)"/></svg>
<!-- v scrollbar -->
<div class="abs" style="left:1174.500px;top:182px;width:13.500px;height:519px;background:linear-gradient(90deg,#a0bde8 0,#86a7d6 14%,#84a4d0 70%,#7c9cc6 100%)"></div>
<div class="abs" style="left:1177px;top:187.500px;width:0;height:0;border:4px solid transparent;border-bottom:4.500px solid #4a68a4;border-top:0"></div>
<div class="abs" style="left:1177px;top:641.500px;width:0;height:0;border:4px solid transparent;border-top:4.500px solid #5676b0;border-bottom:0"></div>
<div class="abs" style="left:1175.500px;top:409px;width:11px;height:18.500px;border:1px solid #8ea8cc;border-radius:2.500px;background:linear-gradient(90deg,#f2f6fc,#d4e1f4)"></div>
<div class="abs" style="left:1178.500px;top:413.500px;width:5px;height:9px;background:repeating-linear-gradient(#7a94be 0 1px,transparent 1px 2px)"></div>
<div class="abs" style="left:1174.500px;top:650px;width:13.500px;height:51px;background:linear-gradient(#9dbce8,#bcd4f4)"></div>
<svg class="abs" style="left:1175px;top:654px" width="12" height="32" viewBox="0 0 12 32" fill="#0c1424"><path d="M6 4.600l3 3.500H3zM6 8.600l3 3.500H3z"/><path d="M6 22.600l3-3.500H3zM6 26.600l3-3.500H3z"/></svg>
<!-- slide -->
<div class="abs" style="left:414px;top:198px;width:555px;height:485.500px;background:linear-gradient(#fefefc 0,#fff 45%,#fff 85%,#fcfcfa 100%);box-shadow:3px 3px 4.500px rgba(20,40,95,.7)"></div>
<svg class="abs" style="left:414px;top:198px" width="555" height="486" viewBox="414 198 555 486" font-family="Liberation Sans, sans-serif" style="filter:blur(.3px)">
<text x="483.600" y="270.800" font-size="35.200" fill="#0a0a0a" textLength="415.500" lengthAdjust="spacingAndGlyphs">Building blocks of Industry 4.0</text>
<ellipse cx="685.500" cy="456.500" rx="81.500" ry="96" fill="#e8b2ae"/>
<g stroke="#fdfdfb" stroke-width="1.600" fill-opacity=".6">
<ellipse cx="685" cy="328" rx="41.500" ry="48.500" fill="#d98a6e"/>
<ellipse cx="763" cy="365" rx="41.500" ry="48.500" fill="#df9d78"/>
<ellipse cx="795.500" cy="456" rx="41.500" ry="48.500" fill="#d9a367"/>
<ellipse cx="763" cy="547" rx="41.500" ry="48.500" fill="#d5af6e"/>
<ellipse cx="685" cy="585" rx="41.500" ry="48.500" fill="#d2be6e"/>
<ellipse cx="606.500" cy="547" rx="41.500" ry="48.500" fill="#cbc56e"/>
<ellipse cx="574.500" cy="456" rx="41.500" ry="48.500" fill="#c5c571"/>
<ellipse cx="606.500" cy="365" rx="41.500" ry="48.500" fill="#bbc578"/>
</g>
<text x="649" y="462" font-size="15.500" fill="#202020" textLength="73.500" lengthAdjust="spacingAndGlyphs">Industry 4.0</text>
<g font-size="9.300" font-weight="bold" fill="#1c1c1c" text-anchor="middle" lengthAdjust="spacingAndGlyphs">
<text x="685" y="325.800" textLength="51">Autonomous</text><text x="685" y="337.600" textLength="29">Robots</text>
<text x="763.300" y="368.400" textLength="42.500">Simulation</text>
<text x="794.600" y="448.500" textLength="57">Horizontal and</text><text x="794.600" y="460.200" textLength="57">vertical system</text><text x="794.600" y="472" textLength="44">integration</text>
<text x="763.300" y="539" textLength="38.500">Industrial</text><text x="763.300" y="551" textLength="45">Internet of</text><text x="763.300" y="563" textLength="26">Things</text>
<text x="685" y="588.500" textLength="58">Cyber Security</text>
<text x="606" y="551" textLength="52.500">Additive Mfg</text>
<text x="574.700" y="454" textLength="47">Augmented</text><text x="574.700" y="465.800" textLength="25.500">reality</text>
<text x="606.700" y="362.300" textLength="30.500">Big data</text><text x="606.700" y="374.300" textLength="34">analytics</text>
</g>
<path d="M617 553.500q1-1.400 2 0t2 0 2 0 2 0 2 0 2 0 2 0 2 0" fill="none" stroke="#e03020" stroke-width=".8"/>
<g font-size="8.800" fill="#9c9c9c" lengthAdjust="spacingAndGlyphs"><text x="447" y="663.500" textLength="37.500">8/2/2023</text><text x="623.500" y="663.500" textLength="137.500">Pavai Engineering College,Namakkal</text><text x="925" y="663.500" textLength="10">12</text></g>
<path d="M799 584v16l3.600-3.400 3 6.400 2.200-1-3-6.200h4.600z" fill="#fbfbfb" stroke="#3c3c3c" stroke-width="1" stroke-linejoin="round"/>
</svg>
<!-- splitter + notes -->
<div class="abs" style="left:208px;top:700.500px;width:980px;height:5.500px;background:linear-gradient(#9fc0ec,#b6d2f4 50%,#a6c6f0)"></div>
<div class="abs" style="left:208px;top:706px;width:967px;height:37px;background:linear-gradient(#f7f7f5,#ededeb 60%,#e6e6e4)"></div>
<div class="t" style="left:216.500px;top:712px;font-size:16.600px;line-height:20px;color:#1e1e1e;transform:scaleX(.815)">Click to add notes</div>
<div class="abs" style="left:1174.500px;top:706px;width:13.500px;height:37px;background:linear-gradient(90deg,#8fb0de,#7fa2d4)"></div>
<div class="abs" style="left:1177px;top:712px;width:0;height:0;border:4px solid transparent;border-bottom:4.500px solid #7898cc;border-top:0"></div>
<div class="abs" style="left:1177px;top:733px;width:0;height:0;border:4px solid transparent;border-top:4.500px solid #7898cc;border-bottom:0"></div>
<!-- status bar -->
<div class="abs" style="left:22px;top:743px;width:1166px;height:21.500px;background:linear-gradient(#c3d8f3 0,#a9c5ea 45%,#8fb1e0 55%,#9dbce6 100%);border-top:1px solid #86a6d4"></div>
<div class="t" style="left:29px;top:747px;font-size:11px;color:#1d3a74">Slide 12 of 23</div>
<div class="abs" style="left:96px;top:746px;width:1px;height:16px;background:#8aa8d4;box-shadow:1px 0 0 #d0e0f6"></div>
<div class="t" style="left:103px;top:747px;font-size:11px;color:#1d3a74">"Office Theme"</div>
<div class="abs" style="left:174px;top:746px;width:1px;height:16px;background:#8aa8d4;box-shadow:1px 0 0 #d0e0f6"></div>
<div class="abs" style="left:962px;top:744px;width:226px;height:20.500px;background:linear-gradient(#a9c6ee 0,#8fb2e4 45%,#7fa5dc 55%,#8db0e2 100%)"></div>
<div class="abs" style="left:962px;top:746px;width:1px;height:16px;background:#86a4d0;box-shadow:1px 0 0 #cddff6"></div>
<div class="abs" style="left:967.500px;top:745.500px;width:16px;height:17px;border:1px solid #e0aa48;border-radius:2px;background:linear-gradient(#fbd88c,#f6bc5c)"></div>
<div class="abs" style="left:984px;top:745.500px;width:30.500px;height:17px;border-radius:2px;background:linear-gradient(#cfdff5,#b4cbec)"></div>
<svg class="abs" style="left:967px;top:745px" width="50" height="18" viewBox="0 0 50 18"><rect x="4" y="4" width="9.500" height="9.500" fill="#fdfdfb" stroke="#5c5440" stroke-width="1"/><path d="M7 4v9.500M7 9.500h6.500" stroke="#5c5440" stroke-width="1"/><rect x="8" y="5" width="5" height="3.500" fill="#c8c4b4"/>
<g fill="#eef3fa" stroke="#6f85ac" stroke-width=".9"><rect x="20.500" y="4.500" width="4" height="3.500"/><rect x="26.500" y="4.500" width="4" height="3.500"/><rect x="20.500" y="10" width="4" height="3.500"/><rect x="26.500" y="10" width="4" height="3.500"/></g>
<g stroke="#7c7c84" fill="#e4e6ec"><rect x="36.500" y="4.500" width="9" height="5.500"/><path d="M35 4h12" stroke-width="1.300"/><path d="M41 10v3.500M38 14h6" fill="none"/></g></svg>
<div class="t" style="left:1021.500px;top:747px;font-size:11px;color:#1d4a8c">68%</div>
<div class="abs" style="left:1060px;top:753.500px;width:91px;height:1px;background:#7f9cc8;box-shadow:0 1px 0 #c6d9f4"></div>
<div class="abs" style="left:1105px;top:750.500px;width:1px;height:7px;background:#86a2cc"></div>
<div class="zc" style="left:1048px"></div><div class="abs" style="left:1051.500px;top:753px;width:6px;height:1.600px;background:#3c5488"></div>
<div class="zc" style="left:1149px"></div><div class="abs" style="left:1152px;top:753px;width:7px;height:1.600px;background:#3c5488"></div><div class="abs" style="left:1154.700px;top:750.300px;width:1.600px;height:7px;background:#3c5488"></div>
<svg class="abs" style="left:1086px;top:747px" width="10" height="14" viewBox="0 0 10 14"><path d="M1.500 1h7v7.500L5 12.500 1.500 8.500z" fill="#e6eefa" stroke="#6c86b4"/><path d="M5 3.500v4" stroke="#9ab0d4"/></svg>
<div class="abs" style="left:1168px;top:746px;width:15.500px;height:15.500px;border:1px solid #9cb6dc;border-radius:2px;background:linear-gradient(#e9f0fa,#c9daf2)"></div>
<svg class="abs" style="left:1169px;top:747px" width="14" height="14" viewBox="0 0 14 14" stroke="#3c4c70" stroke-width="1.100" fill="#3c4c70"><path d="M2 2l3.500 3.500M12 2L8.500 5.500M2 12l3.500-3.500M12 12L8.500 8.500" /><path d="M5.500 3.500v2h-2zM8.500 3.500v2h2zM5.500 10.500v-2h-2zM8.500 10.500v-2h2z" stroke="none"/></svg>
</div>
</div>
<!-- title bar pieces (on black) -->
<div id="tb" class="abs" style="left:0;top:0;width:1380px;height:120px;filter:blur(.5px);pointer-events:none">
<div class="abs" style="left:52px;top:42px;width:84px;height:24.500px;border-radius:3px 12px 12px 3px;background:linear-gradient(#7a7e82,#62666a 45%,#54585c)"></div>
<svg class="abs" style="left:62px;top:44px" width="90" height="20" viewBox="0 0 90 20"><rect x="5.500" y="3.500" width="11" height="12" rx="1" fill="#6a6fc0" stroke="#8a8fd8"/><rect x="8" y="4" width="6" height="5" fill="#f0f0fa"/><rect x="8" y="11.500" width="6" height="4" fill="#2c2c50"/><rect x="9" y="12.500" width="2" height="3" fill="#e8e8f4"/>
<path d="M27.500 6.500q6-3 6 2.500t-4 6.500" fill="none" stroke="#9aa0aa" stroke-width="2"/><path d="M25.500 4v6h6z" fill="#9aa0aa"/><path d="M38 9h5l-2.500 3z" fill="#b4b8c0"/>
<path d="M59.500 6.500q-6 .5-5 6t8 3.500q3.500-2.500 1.500-7" fill="none" stroke="#8a9098" stroke-width="2"/><path d="M57 3.500l5 2.500-4.500 3.500z" fill="#8a9098"/>
<path d="M80 7.500h5M80 10h5l-2.500 3z" fill="#c8ccd4" stroke="#c8ccd4" stroke-width="1"/></svg>
<div class="abs" style="left:26px;top:45px;width:30px;height:36px;border-radius:50%;background:radial-gradient(ellipse at 50% 30%,#f4f4f0 0,#dcdcd8 55%,#a8aaa8 100%);box-shadow:0 0 0 1px #8c8e90"></div>
<svg class="abs" style="left:30.500px;top:51.500px" width="21" height="24" viewBox="0 0 22 22" preserveAspectRatio="none"><rect x="1.500" y="1.500" width="8" height="9" rx="1.500" fill="#f0a030" stroke="#d86818" stroke-width="1.500"/><rect x="11.500" y="4.500" width="7" height="7" rx="1" fill="#7ab0e0" stroke="#3c78c0" stroke-width="1.300"/><rect x="2.500" y="12" width="7.500" height="7.500" rx="1" fill="#f8c030" stroke="#e89820" stroke-width="1.300"/><rect x="11.500" y="13" width="7" height="6.500" rx="1" fill="#8cc048" stroke="#5c9828" stroke-width="1.300"/><rect x="4" y="4" width="3" height="4" fill="#fbe8c8"/><rect x="5" y="14" width="3" height="3" fill="#fdf0c8"/></svg>
<div class="abs" style="left:446px;top:47px;width:321px;height:15px;border-radius:7px;background:#6e6e6e;filter:blur(4px);opacity:.9"></div>
<div class="abs" id="ttl" style="left:447.500px;top:46.500px;width:366px;font-size:12.500px;line-height:16px;color:#0c0c0c;white-space:nowrap;transform-origin:0 50%;transform:scaleX(.834);text-shadow:0 0 3px #9a9a9a,0 0 5px #8a8a8a,0 0 2px #aaa,0 0 4px #8a8a8a">Pavai Invited talk 2-8-23 [Compatibility Mode] - Microsoft PowerPoint</div>
</div>

<!-- ======= participants ======= -->
<div id="people">
<div class="av" style="left:1210px;top:12.8px;background:#e6c4cc;color:#8c1f3f"><span>D</span></div>
<div class="abs" style="left:1203px;top:52.0px;width:59px;height:28px;border-radius:5px;background:#6165a6"></div>
<div class="nm" style="left:1208.5px;top:55.1px;color:#fff">Dr.A....</div>
<div class="av" style="left:1287px;top:12.8px;background:#c9cdc0;color:#4d5328"><span>S</span><i></i></div>
<div class="nm" style="left:1285px;top:55.1px;color:#fff">SHA...</div>
<div class="av" style="left:1210px;top:102.0px;background:#e4e8cf;color:#5d6b22"><span>A</span><i></i></div>
<div class="nm" style="left:1208px;top:144.4px;color:#fff">AVA...</div>
<div class="av" style="left:1287px;top:102.0px;background:#cfdcf0;color:#1c4582"><span>KG</span><i></i></div>
<div class="nm" style="left:1285px;top:144.4px;color:#fff">Kann...</div>
<div class="av" style="left:1210px;top:191.3px;background:#d3dbe5;color:#174a62"><span>PR</span><i></i></div>
<div class="nm" style="left:1208px;top:233.7px;color:#fff">PRA...</div>
<div class="av" style="left:1287px;top:191.3px;background:#d0dbf0;color:#1c4582"><span>N</span><i></i></div>
<div class="nm" style="left:1285px;top:233.7px;color:#fff">NAR...</div>
<div class="av" style="left:1210px;top:280.5px;background:#d4ead8;color:#176a4c"><span>SE</span><i></i></div>
<div class="nm" style="left:1208px;top:322.9px;color:#fff">SAN...</div>
<div class="av" style="left:1287px;top:280.5px;background:#d9ebdb;color:#2c5c3e"><span>H</span><i></i></div>
<div class="nm" style="left:1285px;top:322.9px;color:#fff">Hem...</div>
<div class="av" style="left:1210px;top:369.8px"><svg class="abs" style="left:0;top:0" width="49" height="56" viewBox="0 0 49 56"><rect width="49" height="56" fill="#2b9ad8"/><path d="M3 56V44q6-8 21-10 15 2 22 10v12z" fill="#a33434"/><path d="M20 31h8l1 5-5 5-5-5z" fill="#c08868"/><ellipse cx="24" cy="23" rx="8.600" ry="11" fill="#c9987a"/><path d="M14.500 21q-1.500-17 9.500-18 11 1 9.500 18-1.500-8-9.500-8.500-8 .5-9.500 8.500z" fill="#b4b4b4"/><path d="M17 13q7-5 14 0-7-2.500-14 0z" fill="#8c8c8c"/><rect x="19.500" y="27.500" width="9" height="2.600" rx="1.300" fill="#7c746c"/><path d="M18 20.500h4M26 20.500h4" stroke="#5c4c40" stroke-width="1.200"/><path d="M21 36l3 8 3-8" fill="none" stroke="#7c2424" stroke-width="1"/></svg><i></i></div>
<div class="nm" style="left:1208px;top:412.2px;color:#fff">Vijay...</div>
<div class="av" style="left:1287px;top:369.8px;background:#fbe4d2;color:#9a5c1c"><span>A</span><i></i></div>
<div class="nm" style="left:1285px;top:412.2px;color:#fff">ANA...</div>
<div class="av" style="left:1210px;top:459.1px"><svg class="abs" style="left:0;top:0" width="49" height="56" viewBox="0 0 49 56"><rect width="49" height="56" fill="#cf4a4c"/><path d="M12 36l6-24 5 2-3 22z" fill="#dfe6f4"/><path d="M10 40l3-6h8l-1 6z" fill="#e8e0e8"/><path d="M40 10l6 3v22l-7 3z" fill="#e4dce8"/><path d="M42 8l4 2-1 5-3-2z" fill="#4868c0"/><path d="M9 56V46q8-10 18-11 12 1 18 9v12z" fill="#f1ede4"/><ellipse cx="26.500" cy="20" rx="7.400" ry="9.500" fill="#b88a6a"/><path d="M16.500 19q-3-16 10-16.500 12 .5 10.500 15.500-2-7-10-7.500-8 1-10.500 8.500z" fill="#241814"/><path d="M19.500 22q1 8 7 10.500 6-2.500 7-10.500-1 4-7 5-6-1-7-5z" fill="#2a1c16"/><path d="M31 27q4-1 6 2l1 9-6 1z" fill="#b88a6a"/><rect x="32" y="36" width="7" height="4" rx="1.500" fill="#3c3430"/><path d="M24 40h6" stroke="#d4a848" stroke-width="1.500"/></svg><i></i></div>
<div class="nm" style="left:1208px;top:501.4px;color:#fff">AVU...</div>
<div class="av" style="left:1287px;top:459.1px;background:#e6ead8;color:#5b6a30"><span>V</span><i></i></div>
<div class="nm" style="left:1285px;top:501.4px;color:#fff">VIKR...</div>
<div class="av" style="left:1210px;top:548.3px;background:#efd6e6;color:#6c2052"><span>D</span><i></i></div>
<div class="nm" style="left:1208px;top:590.7px;color:#fff">Dr.M...</div>
<div class="av" style="left:1287px;top:548.3px;background:#e6ead8;color:#5b6a30"><span>V</span><i></i></div>
<div class="nm" style="left:1285px;top:590.7px;color:#fff">V.Ha...</div>
<div class="av" style="left:1210px;top:637.6px;background:#f0d6e6;color:#7a2052"><span>P</span><i></i></div>
<div class="nm" style="left:1208px;top:680.0px;color:#fff">PAR...</div>
<div class="av" style="left:1287px;top:637.6px"><svg class="abs" style="left:0;top:0" width="49" height="56" viewBox="0 0 49 56"><rect width="49" height="56" fill="#1c1412"/><rect x="4" y="0" width="38" height="56" fill="#e9e2d6"/><rect x="4" y="0" width="6" height="56" fill="#5c3c30"/><rect x="12" y="6" width="4" height="20" fill="#b89078"/><rect x="30" y="2" width="4" height="30" fill="#8c6450"/><rect x="35.500" y="0" width="6.500" height="56" fill="#e88a24"/><rect x="42" y="6" width="2" height="44" fill="#f4f0e8"/><path d="M4 56V30q3-6 12-8l7.500 3 7.500-3q8 2 8 10v24z" fill="#f2849a"/><path d="M19 21l4.500 5 4.500-5-1-3h-7z" fill="#a87454"/><ellipse cx="23.600" cy="14" rx="6.200" ry="7.800" fill="#ae7c5c"/><path d="M16.800 12q-1.500-9.500 6.800-10 8 .5 6.800 10-1.500-4.500-6.800-5-5 .5-6.800 5z" fill="#1a1210"/><path d="M20.500 17.500h6" stroke="#3c2820" stroke-width="1.400"/></svg><i></i></div>
<div class="nm" style="left:1285px;top:680.0px;color:#fff">Nan...</div>
<div class="av" style="left:1210px;top:726.8px;background:#cfcfe6;color:#2b2b72"><span>AC</span><i></i></div>
<div class="nm" style="left:1208px;top:769.2px;color:#b4b4b4">AGA...</div>
<div class="av" style="left:1288px;top:728.3px;width:47px;height:54px;background:#474773;color:#d4d4f2;font-size:13.5px;line-height:54px"><span>+46</span></div>
</div>

<!-- ======= player controls ======= -->
<div id="spk" class="abs">Dr.A.E.Narayanan (Guest)</div>
<div id="track" class="abs"></div>
<div id="played" class="abs"></div>
<div id="thumb" class="abs"></div>
<div id="tip" class="abs"><span>39:01</span></div>
<div id="time" class="abs">39:04 / 59:30</div>
<div id="spd" class="abs">1x</div>
<!--ICONS-->
<svg class="abs" style="left:36px;top:849px" width="18" height="22" viewBox="0 0 18 22" fill="none" stroke="#dcdcdc" stroke-width="1.2"><rect x="2.1" y="2.3" width="4.6" height="16.8" rx="1.6"/><rect x="9.6" y="2.3" width="4.6" height="16.8" rx="1.6"/></svg>
<svg class="abs" style="left:64px;top:849px" width="22" height="22" viewBox="0 0 22 22" fill="none" stroke="#dcdcdc" stroke-width="1.2" stroke-linecap="round" stroke-linejoin="round"><path d="M4.6 8.6C6.4 6 9 5 11.4 5.4c2.4.4 4.300 2 5.200 4.400"/><path d="M3.600 4.300l.6 4.700 4.600-.8"/><text x="5.600" y="18.600" font-size="8.600" fill="#e4e4e4" stroke="none" textLength="9.800" lengthAdjust="spacingAndGlyphs">10</text></svg>
<svg class="abs" style="left:93px;top:849px" width="22" height="22" viewBox="0 0 22 22" fill="none" stroke="#dcdcdc" stroke-width="1.2" stroke-linecap="round" stroke-linejoin="round"><path d="M17.400 8.6C15.600 6 13 5 10.600 5.4 8.200 5.800 6.300 7.400 5.400 9.800"/><path d="M18.400 4.300l-.6 4.700-4.600-.8"/><text x="6.600" y="18.600" font-size="8.600" fill="#e4e4e4" stroke="none" textLength="9.800" lengthAdjust="spacingAndGlyphs">10</text></svg>
<svg class="abs" style="left:123px;top:849px" width="22" height="22" viewBox="0 0 22 22" fill="none" stroke="#dcdcdc" stroke-width="1.2" stroke-linecap="round" stroke-linejoin="round"><path d="M3.400 8.200h3.200l4.600-4.400v14.600l-4.600-4.400H3.400z"/><path d="M14 8.200c.9 1.700.9 4 0 5.700"/><path d="M16.400 6.400c1.700 2.900 1.700 6.400 0 9.300"/></svg>
<svg class="abs" style="left:1206px;top:847px" width="24" height="26" viewBox="0 0 24 26" fill="none" stroke="#e6e6e6" stroke-width="1.25" stroke-linecap="round" stroke-linejoin="round"><ellipse cx="9.200" cy="8.600" rx="3.300" ry="3.800"/><path d="M3.400 16.200h11.600c0 4-2.400 6.200-5.800 6.200s-5.800-2.200-5.800-6.200z"/><path d="M15.200 5.400c1.200 1.900 1.200 4.600 0 6.500"/><path d="M17.800 3.400c2.200 3.200 2.200 7.400 0 10.600"/></svg>
<svg class="abs" style="left:1237px;top:850px" width="22" height="20" viewBox="0 0 22 20" fill="none" stroke="#f0f0f0" stroke-width="1.3" stroke-linecap="round"><rect x="3" y="3" width="15.600" height="13.800" rx="2.600"/><path d="M9.600 8.200c-1.700-1.500-3.900-.5-3.900 1.700s2.200 3.200 3.900 1.700" stroke-width="1.500"/><path d="M15.800 8.200c-1.700-1.500-3.900-.5-3.900 1.700s2.200 3.200 3.900 1.700" stroke-width="1.500"/></svg>
<svg class="abs" style="left:1296px;top:849px" width="22" height="22" viewBox="-11 -11 22 22" fill="none" stroke="#e6e6e6" stroke-width="1.200" stroke-linejoin="round"><path d="M-1.600-8.300h3.200l.7 2.300 1.600.9 2.300-.6 1.600 2.800-1.700 1.700v1.900l1.700 1.700-1.600 2.800-2.300-.6-1.600.9-.7 2.300h-3.200l-.7-2.300-1.600-.9-2.300.6-1.600-2.800 1.700-1.700v-1.900l-1.700-1.700 1.600-2.800 2.300.6 1.600-.9z"/><circle r="1.900"/></svg>
<svg class="abs" style="left:1327px;top:849px" width="20" height="22" viewBox="0 0 20 22" fill="none" stroke="#e0e0e0" stroke-width="1.300" stroke-linecap="round" stroke-linejoin="round"><path d="M3 7.400h1.800q1.800 0 1.800-1.800V3.400"/><path d="M17 7.400h-1.800q-1.800 0-1.800-1.800V3.400"/><path d="M3 14.600h1.800q1.800 0 1.800 1.800v2.200"/><path d="M17 14.600h-1.800q-1.800 0-1.800 1.800v2.200"/></svg>
<!--/ICONS-->

</body>
</html>
